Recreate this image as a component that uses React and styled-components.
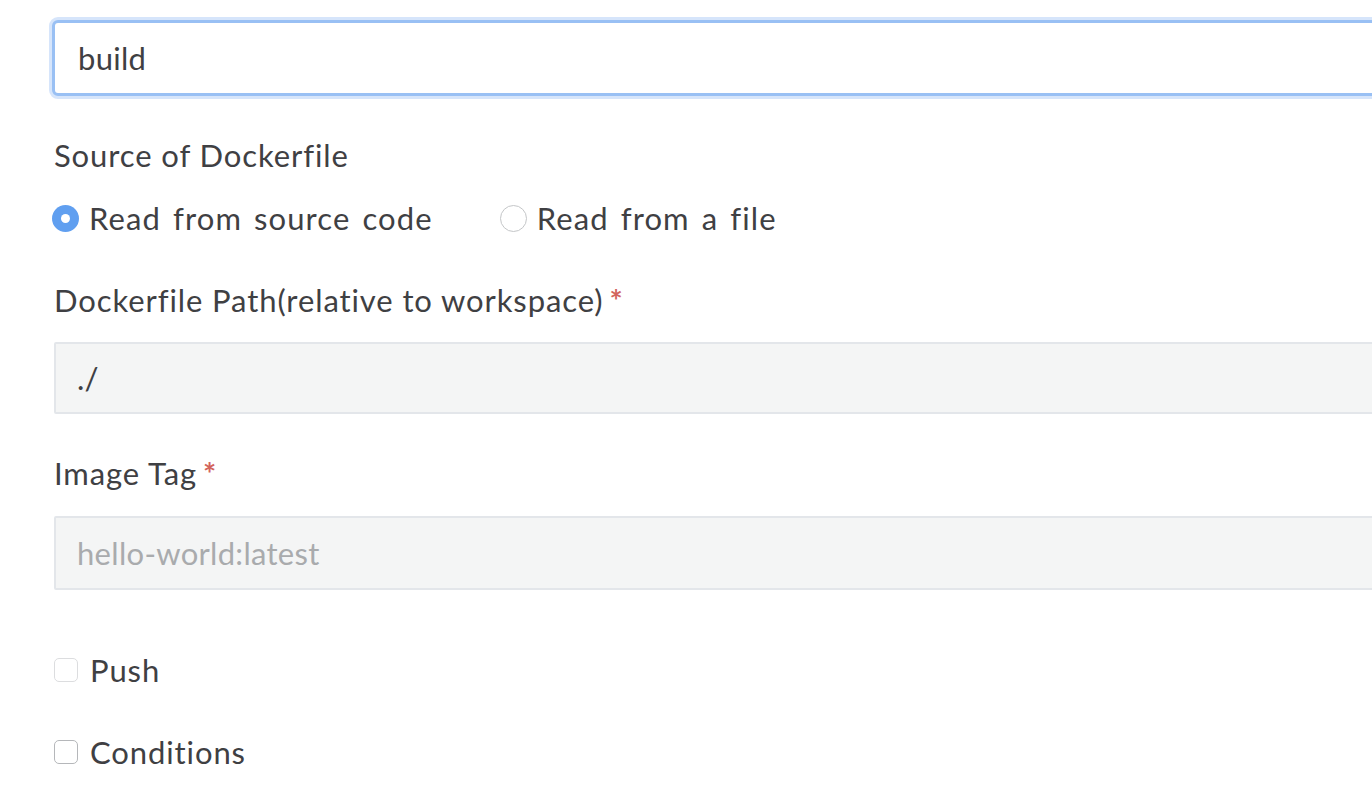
import React, { useState } from 'react';
import styled, { createGlobalStyle } from 'styled-components';

const GlobalStyle = createGlobalStyle`
    body {
        margin: 0;
        background: #fff;
        font-family: Lato, "Open Sans", sans-serif;
        color: #3f4043;
        overflow: hidden;
    }
`;

const Form = styled.div`
    width: 1372px;
    height: 790px;
    overflow: hidden;
    padding: 20px 0 0 54px;
    box-sizing: border-box;
`;

const TextInput = styled.input`
    display: block;
    box-sizing: border-box;
    width: 1400px;
    height: ${(p) => p.$height || 72}px;
    margin: ${(p) => p.$margin || '0'};
    padding: 0 ${(p) => (p.$focused ? 23 : 21)}px;
    font-family: inherit;
    font-size: 31px;
    letter-spacing: 0.3px;
    color: #3f4043;
    background: ${(p) => (p.$focused ? '#fff' : '#f4f5f5')};
    border: ${(p) => (p.$focused ? '3px solid #99c0f4' : '2px solid #e3e6ea')};
    border-radius: ${(p) => (p.$focused ? '6px' : '2px')};
    box-shadow: ${(p) => (p.$focused ? '0 0 0 3px #d6e5fb' : 'none')};
    outline: none;

    &::placeholder {
        color: #a9abad;
    }
`;

const Label = styled.div`
    font-size: 31px;
    line-height: 40px;
    letter-spacing: 0.9px;
    margin: ${(p) => p.$margin || '0'};
`;

const Required = styled.span`
    color: #d2645c;
    font-weight: 700;
    margin-left: 6px;
`;

const RadioRow = styled.div`
    display: flex;
    align-items: center;
    height: 40px;
    margin: 23px 0 0 -2px;
    gap: 67px;
`;

const Option = styled.label`
    display: flex;
    align-items: center;
    gap: 10px;
    font-size: 31px;
    letter-spacing: 1.1px;
    word-spacing: 3px;
`;

const RadioDot = styled.span`
    width: 27px;
    height: 27px;
    border-radius: 50%;
    box-sizing: border-box;
    display: flex;
    align-items: center;
    justify-content: center;
    background: ${(p) => (p.$checked ? '#609ff0' : '#fff')};
    border: ${(p) => (p.$checked ? 'none' : '1.5px solid #c4c6c8')};

    &::after {
        content: '';
        display: ${(p) => (p.$checked ? 'block' : 'none')};
        width: 9px;
        height: 9px;
        border-radius: 50%;
        background: #fff;
    }
`;

const CheckRow = styled.label`
    display: flex;
    align-items: center;
    gap: 12px;
    height: 40px;
    font-size: 31px;
    letter-spacing: 0.9px;
    margin: ${(p) => p.$margin || '0'};
`;

const Box = styled.span`
    width: 24px;
    height: 24px;
    box-sizing: border-box;
    border-radius: 5px;
    background: #fff;
    border: 1.5px solid ${(p) => (p.$muted ? '#dcdddf' : '#b5b7ba')};
`;

export default function App() {
    const [source, setSource] = useState('code');

    return (
        <>
            <GlobalStyle />
            <Form>
                <TextInput $focused $height={76} defaultValue="build" style={{ marginLeft: -2 }} />

                <Label $margin="39px 0 0">Source of Dockerfile</Label>
                <RadioRow>
                    <Option onClick={() => setSource('code')}>
                        <RadioDot $checked={source === 'code'} />
                        Read from source code
                    </Option>
                    <Option onClick={() => setSource('file')}>
                        <RadioDot $checked={source === 'file'} />
                        Read from a file
                    </Option>
                </RadioRow>

                <Label $margin="42px 0 0">
                    Dockerfile Path(relative to workspace)<Required>*</Required>
                </Label>
                <TextInput $margin="22px 0 0" defaultValue="./" />

                <Label $margin="39px 0 0">
                    Image Tag<Required>*</Required>
                </Label>
                <TextInput $margin="23px 0 0" $height={74} placeholder="hello-world:latest" />

                <CheckRow $margin="60px 0 0">
                    <Box $muted />
                    Push
                </CheckRow>
                <CheckRow $margin="42px 0 0">
                    <Box />
                    Conditions
                </CheckRow>
            </Form>
        </>
    );
}
